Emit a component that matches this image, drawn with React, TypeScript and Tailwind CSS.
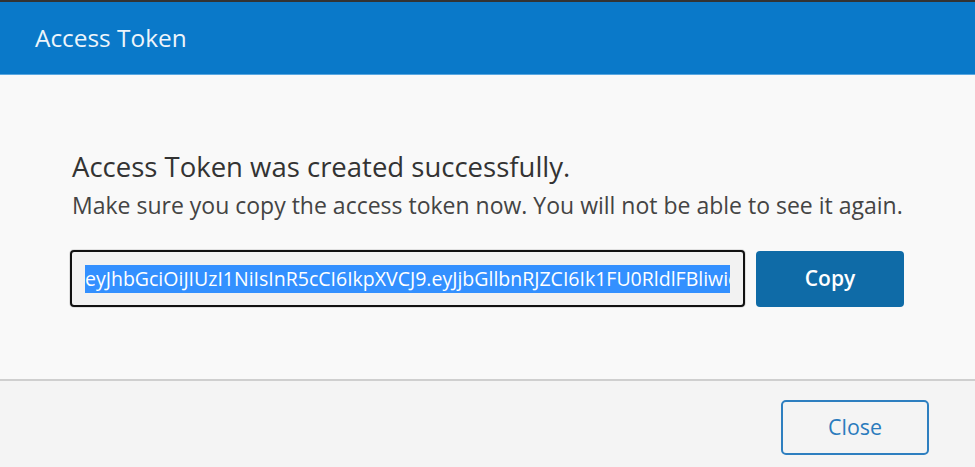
import React from "react";

export default function App() {
  const token =
    "eyJhbGciOiJIUzI1NiIsInR5cCI6IkpXVCJ9.eyJjbGllbnRJZCI6Ik1FU0RldlFBliwic2NvcGUiOiJhcGkiLCJleHAiOjE3MDAwMDAwMDB9";
  return (
    <div
      className="w-[975px] h-[467px] flex flex-col bg-[#f4f4f4] overflow-hidden"
      style={{ fontFamily: '"Open Sans", "Noto Sans", sans-serif' }}
    >
      <div className="h-[2px] bg-[#333333]" />
      <div className="h-[73px] bg-[#0a79c9] flex items-center pl-[35px] border-b border-[#5aa7e0]">
        <span className="text-[24.4px] text-[#eef5fb] leading-none">Access Token</span>
      </div>
      <div className="h-[306px] bg-[#f9f9f9] border-b-2 border-[#cfcfcf] pl-[72px] pt-[75px]">
        <div className="text-[27.5px] text-[#333333] leading-[34px]">
          Access Token was created successfully.
        </div>
        <div className="text-[23px] text-[#444444] leading-[30px] mt-[6px] whitespace-nowrap">
          Make sure you copy the access token now. You will not be able to see it again.
        </div>
        <div className="flex items-center mt-[30px] ml-[-2px] gap-[11px]">
          <div className="w-[675px] h-[57px] shrink-0 border-2 border-[#111111] rounded-[4px] bg-[#f2f2f2] shadow-[0_0_0_1px_#e0e0e0] flex items-center pl-[13px] pr-[13px] overflow-hidden">
            <div className="overflow-hidden whitespace-nowrap w-full">
              <span className="bg-[#3390ff] text-white text-[19.5px] leading-[28px] inline-block">
                {token}
              </span>
            </div>
          </div>
          <button className="w-[148px] h-[56px] shrink-0 bg-[#0f6ba7] rounded-[4px] text-white text-[21px] font-semibold">
            Copy
          </button>
        </div>
      </div>
      <div className="flex-1 flex justify-end items-start pr-[46px] pt-[19px]">
        <button className="w-[148px] h-[55px] border-2 border-[#2e7fc0] rounded-[5px] text-[#2a7bbd] text-[21.4px] bg-transparent">
          Close
        </button>
      </div>
    </div>
  );
}
